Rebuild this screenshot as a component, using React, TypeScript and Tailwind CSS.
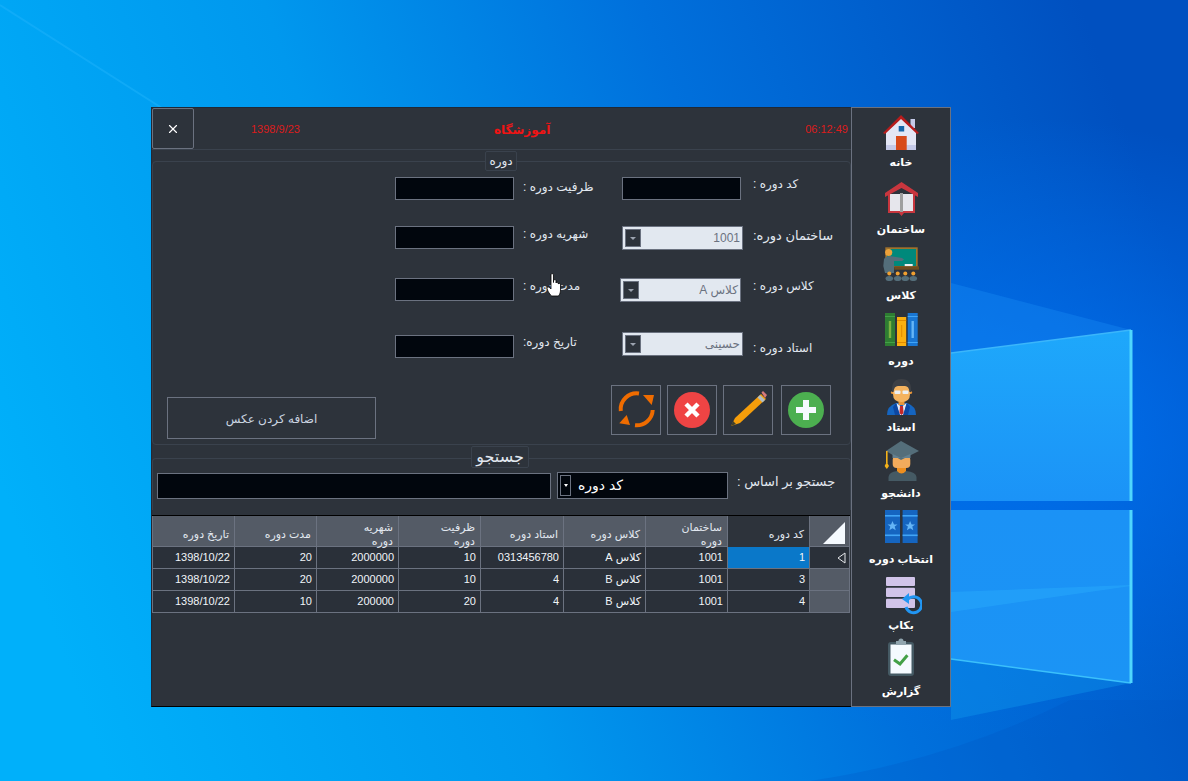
import React from 'react';
import { X } from 'lucide-react';

const Wallpaper = () => (
  <svg className="absolute inset-0 h-full w-full" viewBox="0 0 1188 781" preserveAspectRatio="none">
    <defs>
      <linearGradient id="wall" x1="0" y1="0.62" x2="1" y2="0.38">
        <stop offset="0" stopColor="#00b0fa" />
        <stop offset="0.35" stopColor="#0098ee" />
        <stop offset="0.65" stopColor="#0070dc" />
        <stop offset="1" stopColor="#0050c0" />
      </linearGradient>
      <radialGradient id="glow" cx="0.85" cy="0.55" r="0.4">
        <stop offset="0" stopColor="#0070f0" stopOpacity="0.9" />
        <stop offset="1" stopColor="#0070f0" stopOpacity="0" />
      </radialGradient>
      <linearGradient id="pane" x1="0" y1="0" x2="0" y2="1">
        <stop offset="0" stopColor="#1ea8fb" />
        <stop offset="1" stopColor="#1b93f7" />
      </linearGradient>
      <linearGradient id="pane2" x1="0" y1="0" x2="0" y2="1">
        <stop offset="0" stopColor="#1b92f6" />
        <stop offset="1" stopColor="#1b94f5" />
      </linearGradient>
    </defs>
    <rect width="1188" height="781" fill="url(#wall)" />
    <rect width="1188" height="781" fill="url(#glow)" />
    <path d="M0 5L165 110" stroke="#1ab0fa" strokeWidth="2" opacity="0.6" />
    <path d="M951 283L1131 330L951 353Z" fill="#1a90f5" opacity="0.35" />
    <path d="M951 659L1131 683L951 720Z" fill="#10a0f0" opacity="0.35" />
    <path d="M1070 700Q950 760 810 781L1188 781L1188 700Z" fill="#0050c0" opacity="0.22" />
    <path d="M951 353L1131 330L1131 501L951 501Z" fill="url(#pane)" />
    <path d="M951 510L1131 510L1131 683L951 659Z" fill="url(#pane2)" />
    <path d="M951 592L1131 585L1131 586L951 612Z" fill="#2aaefc" opacity="0.45" />
    <path d="M951 353L1131 330" stroke="#3bb6fb" strokeWidth="1.5" />
    <path d="M951 659L1131 683" stroke="#3bc0fb" strokeWidth="1.5" />
    <path d="M1131 330V501M1131 510V683" stroke="#4fd6fd" strokeWidth="3" />
  </svg>
);

const HomeIcon = () => (
  <svg width="36" height="36" viewBox="0 0 36 36">
    <rect x="27.5" y="4" width="4.5" height="9" fill="#c5cae9" />
    <path d="M3 17L18 3L33 17V35H3Z" fill="#e3e6f5" />
    <rect x="3" y="30" width="30" height="5" fill="#c5cae9" />
    <rect x="15.7" y="11" width="5.5" height="5.5" fill="#1565a8" />
    <rect x="13" y="21" width="10.7" height="14" fill="#d84a1b" />
    <path d="M0 18L18 0L36 18L34 19L18 4L2 19Z" fill="#b71c1c" />
  </svg>
);

const BookIcon = () => (
  <svg width="33" height="35" viewBox="0 0 33 35">
    <path d="M3 12H30V31H19L16.5 34L14 31H3Z" fill="#c8363e" />
    <rect x="5" y="12" width="11" height="17" fill="#e6e6ec" />
    <rect x="17" y="12" width="11" height="17" fill="#e6e6ec" />
    <rect x="15" y="11" width="3" height="19" fill="#9e9e9e" />
    <path d="M0 11L16.5 0L33 11V15L16.5 6L0 15Z" fill="#c8363e" />
  </svg>
);

const ClassIcon = () => (
  <svg width="36" height="34" viewBox="0 0 36 34">
    <rect x="2.3" y="0.3" width="32.4" height="20" fill="#a0712b" />
    <rect x="4" y="2" width="29" height="17" fill="#00897b" />
    <rect x="21.7" y="17" width="8" height="2.3" fill="#eceff1" />
    <rect x="11.3" y="19.3" width="25" height="3.4" fill="#6d4c1f" />
    <path d="M1 12Q3 9 7 9L19 11L21 12.5L19 14L11 14V26H2L0.3 19Z" fill="#546e7a" />
    <circle cx="5.7" cy="5.5" r="3.6" fill="#eda13a" />
    {[6.3, 14.7, 22.3, 30.3].map(x => (
      <g key={x}>
        <ellipse cx={x} cy="31.5" rx="3.8" ry="2.6" fill="#546e7a" />
        <circle cx={x} cy="26.5" r="2" fill="#f0a030" />
      </g>
    ))}
  </svg>
);

const BooksIcon = () => (
  <svg width="33" height="33" viewBox="0 0 33 33">
    <rect x="0" y="0" width="10" height="33" fill="#2e7d32" />
    <rect x="0" y="3" width="10" height="1" fill="#43a047" />
    <rect x="0" y="29" width="10" height="1" fill="#43a047" />
    <rect x="3.8" y="8" width="2.4" height="17" fill="#7cb342" />
    <rect x="12" y="4" width="9.2" height="29" fill="#fbb010" />
    <rect x="12" y="7" width="9.2" height="1" fill="#e08b00" />
    <rect x="12" y="29" width="9.2" height="1" fill="#e08b00" />
    <rect x="16.2" y="12" width="1" height="12" fill="#e08b00" />
    <rect x="22.7" y="0" width="10" height="33" fill="#1976d2" />
    <rect x="22.7" y="3" width="10" height="1" fill="#42a5f5" />
    <rect x="22.7" y="29" width="10" height="1" fill="#42a5f5" />
    <rect x="26.5" y="8" width="2.4" height="17" fill="#64b5f6" />
  </svg>
);

const TeacherIcon = () => (
  <svg width="29" height="36" viewBox="0 0 29 36">
    <path d="M0 36Q0 27 9 24H20Q29 27 29 36Z" fill="#1565c0" />
    <path d="M9.5 24L14.5 28L19.5 24L16.5 36H12.5Z" fill="#e8eaf6" />
    <path d="M13 27H16L16.6 34L14.5 36L12.4 34Z" fill="#c62828" />
    <path d="M9 24L13 36H8L6 28ZM20 24L16 36H21L23 28Z" fill="#0d47a1" />
    <rect x="11.5" y="19" width="6" height="7" fill="#e8963a" />
    <circle cx="5.5" cy="13.5" r="1.6" fill="#e8963a" />
    <circle cx="23.5" cy="13.5" r="1.6" fill="#e8963a" />
    <path d="M6 12Q6 4 14.5 4Q23 4 23 12V15Q23 23 14.5 23Q6 23 6 15Z" fill="#f5b35e" />
    <path d="M5 13Q4 0 14.5 0Q25 0 24 13L22.5 13Q22 7 18 7H11Q7 7 6.5 13Z" fill="#3d4045" />
    <rect x="7.5" y="11.5" width="6" height="3.5" rx="1" fill="#eceff1" />
    <rect x="15.5" y="11.5" width="6" height="3.5" rx="1" fill="#eceff1" />
  </svg>
);

const StudentIcon = () => (
  <svg width="35" height="40" viewBox="0 0 35 40">
    <path d="M4.5 40V36Q5 31 13 30H22Q32 31 32.5 36V40Z" fill="#455a64" />
    <path d="M13 26H22V30Q17.5 35 13 30Z" fill="#ee8f1f" />
    <rect x="8.7" y="15" width="17.6" height="12" rx="4" fill="#f2ab5c" />
    <rect x="8.7" y="10" width="17.6" height="7" fill="#607d8b" />
    <path d="M17 0L35 10L17 19L2 10Z" fill="#546e7a" />
    <path d="M8.7 13L17 17L26.3 13V17H8.7Z" fill="#64808f" />
    <rect x="2" y="10" width="1.6" height="12" fill="#f3b21a" />
    <path d="M2.8 21L5 25L2.8 28L0.6 25Z" fill="#f3b21a" />
  </svg>
);

const SelectIcon = () => (
  <svg width="33" height="33" viewBox="0 0 33 33">
    {[0, 17.6].map(x => (
      <g key={x}>
        <rect x={x} y="0" width="15" height="33" fill="#1565c0" />
        <rect x={x} y="5" width="15" height="1.6" fill="#42a5f5" />
        <rect x={x} y="24.5" width="15" height="1.6" fill="#42a5f5" />
        <path
          transform={`translate(${x + 7.5} 16)`}
          d="M0 -5L1.5 -1.6L5 -1.6L2.2 0.6L3.2 4.2L0 2.2L-3.2 4.2L-2.2 0.6L-5 -1.6L-1.5 -1.6Z"
          fill="#64b5f6"
        />
      </g>
    ))}
  </svg>
);

const BackupIcon = () => (
  <svg width="36" height="38" viewBox="0 0 36 38">
    <rect x="0" y="0" width="29" height="9" rx="1" fill="#d1c4e9" />
    <rect x="0" y="10.7" width="29" height="9.3" rx="1" fill="#d1c4e9" />
    <rect x="0" y="21.7" width="29" height="9.3" rx="1" fill="#d1c4e9" />
    <path d="M22 22A8 8 0 1 1 20 30" fill="none" stroke="#2196f3" strokeWidth="3" />
    <path d="M16 22L23 16V27Z" fill="#2196f3" />
  </svg>
);

const ReportIcon = () => (
  <svg width="26" height="40" viewBox="0 0 26 40">
    <rect x="0" y="5" width="26" height="34" rx="3" fill="#455a64" />
    <rect x="2.5" y="7.5" width="21" height="29" fill="#f5faff" />
    <path d="M8 8V4H10.5A2.5 2.5 0 0 1 15.5 4H18V8Z" fill="#90a4ae" />
    <path d="M6 22.7L12 27L19.4 18.3" fill="none" stroke="#43a047" strokeWidth="3" />
  </svg>
);

const navItems = [
  { label: 'خانه', icon: <HomeIcon />, box: 'h-[39px]' },
  { label: 'ساختمان', icon: <BookIcon />, box: 'h-[40px] pt-px' },
  { label: 'کلاس', icon: <ClassIcon />, box: 'h-[41px] pt-px' },
  { label: 'دوره', icon: <BooksIcon />, box: 'h-[41px] pt-px' },
  { label: 'استاد', icon: <TeacherIcon />, box: 'h-[41px] pt-px' },
  { label: 'دانشجو', icon: <StudentIcon />, box: 'h-[44px] -mt-[2px]' },
  { label: 'انتخاب دوره', icon: <SelectIcon />, box: 'h-[42px] pt-px' },
  { label: 'بکاپ', icon: <BackupIcon />, box: 'h-[42px] pt-[2px] pl-[6px]' },
  { label: 'گزارش', icon: <ReportIcon />, box: 'h-[46px] -mt-[3px]' },
];

const Sidebar = () => (
  <aside className="flex h-full w-[100px] flex-col items-center border border-[#6b7280] pt-[7px]">
    {navItems.map(item => (
      <div key={item.label} className="flex h-[66px] w-full flex-col items-center">
        <div className={`flex items-start justify-center ${item.box}`}>{item.icon}</div>
        <span dir="rtl" className="text-[11px] leading-[16px] font-bold text-white">
          {item.label}
        </span>
      </div>
    ))}
  </aside>
);

const DarkInput = ({ className = '' }: { className?: string }) => (
  <div className={`h-[23px] w-[119px] shrink-0 border border-[#6b7280] bg-[#01060d] ${className}`} />
);

const Combo = ({ value, className = '' }: { value: string; className?: string }) => (
  <div className={`flex h-[24px] w-[121px] shrink-0 items-center justify-between border border-[#6b7280] bg-[#e2e8f0] pl-[2px] pr-[2px] ${className}`}>
    <div className="flex h-[18px] w-[16px] items-center justify-center border border-[#6b7280] bg-[#2d333b]">
      <div className="h-0 w-0 border-x-[3px] border-t-[3px] border-x-transparent border-t-[#9ca3af]" />
    </div>
    <span dir="rtl" className="text-[12px] text-[#6b7280]">{value}</span>
  </div>
);

const Label = ({ text, className = 'text-[12px]' }: { text: string; className?: string }) => (
  <span dir="rtl" className={`block w-fit leading-[16px] whitespace-nowrap text-[#e2e8f0] ${className}`}>
    {text}
  </span>
);

const Legend = ({ text, className }: { text: string; className: string }) => (
  <div className={`absolute flex items-center justify-center rounded-[2px] border border-[#3a424d] bg-[#2d333b] text-[#e2e8f0] ${className}`}>
    <span dir="rtl">{text}</span>
  </div>
);

const CourseForm = () => (
  <div className="pl-[242px] pt-[15px]">
    <div className="flex h-[49px] items-start">
      <DarkInput />
      <div className="w-[108px] pl-[9px]"><Label text="ظرفیت دوره :" className="mt-[2px] text-[12px]" /></div>
      <DarkInput />
      <div className="pl-[12px]"><Label text="کد دوره :" className="-mt-px text-[12px]" /></div>
    </div>
    <div className="flex h-[52px] items-start">
      <DarkInput />
      <div className="w-[108px] pl-[9px]"><Label text="شهریه دوره :" /></div>
      <Combo value="1001" />
      <div className="pl-[10px]"><Label text="ساختمان دوره:" className="mt-[2px] text-[13px]" /></div>
    </div>
    <div className="flex h-[54px] items-start">
      <DarkInput />
      <div className="w-[106px] pl-[9px]"><Label text="مدت دوره :" /></div>
      <Combo value="کلاس A" />
      <div className="pl-[12px]"><Label text="کلاس دوره :" /></div>
    </div>
    <div className="flex h-[53px] items-start">
      <DarkInput className="mt-[3px]" />
      <div className="w-[108px] pl-[9px]"><Label text="تاریخ دوره:" className="mt-[2px] text-[12px]" /></div>
      <Combo value="حسینی" />
      <div className="pl-[10px]"><Label text="استاد دوره :" className="mt-[8px] text-[12px]" /></div>
    </div>
  </div>
);

const iconButton = 'flex h-[50px] w-[50px] items-center justify-center border border-[#6b7280]';

const ActionButtons = () => (
  <div className="flex items-start pl-[14px]">
    <button className="mt-[12px] flex h-[42px] w-[209px] items-center justify-center border border-[#6b7280] pt-[2px] text-[12px] text-[#cbd5e1]">
      <span dir="rtl">اضافه کردن عکس</span>
    </button>
    <div className="ml-[235px] flex">
      <button className={iconButton}>
        <svg width="40" height="40" viewBox="0 0 40 40">
          <path d="M23 3.5A16 16 0 0 0 4.8 21" fill="none" stroke="#ef6c00" strokeWidth="4" />
          <path d="M19 35.2A16 16 0 0 0 36.7 20" fill="none" stroke="#ef6c00" strokeWidth="4" />
          <path d="M27 5L38 5L35.7 15Z" fill="#ef6c00" />
          <path d="M3.3 33.3L14 35L10.7 25Z" fill="#ef6c00" />
        </svg>
      </button>
      <button className={`${iconButton} ml-[6px]`}>
        <svg width="36" height="36" viewBox="0 0 36 36">
          <circle cx="18" cy="18" r="18" fill="#ef4444" />
          <path d="M12 12L24 24M24 12L12 24" stroke="#fff" strokeWidth="4.5" />
        </svg>
      </button>
      <button className={`${iconButton} ml-[6px]`}>
        <svg width="40" height="40" viewBox="0 0 40 40">
          <path d="M3 36L7 28L33 4L38 9L12 33Z" fill="#f59e0b" />
          <path d="M3 36L5 31L8 34Z" fill="#3f3f2a" />
          <path d="M32 5L37 10L34.5 12.5L29.5 7.5Z" fill="#b0bec5" />
          <path d="M33.5 2.5L35 1L39 5L37 8Z" fill="#d77a7a" />
        </svg>
      </button>
      <button className={`${iconButton} ml-[8px]`}>
        <svg width="36" height="36" viewBox="0 0 36 36">
          <circle cx="18" cy="18" r="18" fill="#4caf50" />
          <path d="M18 8V28M8 18H28" stroke="#f5faff" strokeWidth="6" />
        </svg>
      </button>
    </div>
  </div>
);

const SearchBar = () => (
  <div className="flex items-start pl-[4px] pt-[13px]">
    <div className="mt-px h-[26px] w-[394px] border border-[#6b7280] bg-[#01060d]" />
    <div className="ml-[6px] flex h-[27px] w-[171px] items-center border border-[#6b7280] bg-[#01060d] pl-[2px]">
      <div className="flex h-[21px] w-[11px] items-center justify-center border border-[#6b7280]">
        <div className="h-0 w-0 border-x-[2.5px] border-t-[3px] border-x-transparent border-t-white" />
      </div>
      <span dir="rtl" className="ml-[7px] text-[14px] text-white">کد دوره</span>
    </div>
    <Label text="جستجو بر اساس :" className="ml-[9px] mt-[2px] text-[13px]" />
  </div>
);

const columns = ['تاریخ دوره', 'مدت دوره', 'شهریه\nدوره', 'ظرفیت\nدوره', 'استاد دوره', 'کلاس دوره', 'ساختمان\nدوره', 'کد دوره'];

const rows = [
  ['1398/10/22', '20', '2000000', '10', '0313456780', 'کلاس A', '1001', '1'],
  ['1398/10/22', '20', '2000000', '10', '4', 'کلاس B', '1001', '3'],
  ['1398/10/22', '10', '200000', '20', '4', 'کلاس B', '1001', '4'],
];

const gridCols = 'grid grid-cols-[82px_82px_82px_82px_83px_82px_82px_82px_40px]';

const CourseTable = () => (
  <div className="mt-[5px] w-[698px] border-t border-black">
    <div className={`${gridCols} h-[31px] border-r border-b border-[#6b7280] bg-[#545b66]`}>
      {columns.map((col, i) => (
        <div
          key={col}
          dir="rtl"
          className={`flex items-center border-l border-[#6b7280] pr-[5px] pt-[4px] text-[11px] leading-[14px] whitespace-pre-line text-[#e2e8f0] ${i === 7 ? 'bg-[#2d333b]' : ''}`}
        >
          {col}
        </div>
      ))}
      <div className="flex items-center justify-center border-l border-[#6b7280]">
        <div className="mt-[2px] ml-[8px] h-0 w-0 border-b-[22px] border-l-[22px] border-b-[#f5faff] border-l-transparent" />
      </div>
    </div>
    {rows.map((row, r) => (
      <div key={r} className={`${gridCols} h-[22px] border-r border-b border-[#6b7280] bg-[#2a3039]`}>
        {row.map((cell, c) => (
          <div
            key={c}
            dir="rtl"
            className={`flex items-center border-l border-[#6b7280] pr-[4px] text-[11px] text-[#f1f5f9] ${r === 0 && c === 7 ? 'bg-[#0a78c9]' : ''}`}
          >
            {cell}
          </div>
        ))}
        <div className={`flex items-center border-l border-[#6b7280] ${r === 0 ? 'justify-end pr-[3px]' : 'bg-[#545b66]'}`}>
          {r === 0 && (
            <svg width="9" height="12" viewBox="0 0 9 12">
              <path d="M8 1V11L1 6Z" fill="none" stroke="#e5e7eb" />
            </svg>
          )}
        </div>
      </div>
    ))}
  </div>
);

export default function App() {
  return (
    <div className="relative h-[781px] w-[1188px] overflow-hidden font-['Liberation_Sans','DejaVu_Sans',sans-serif]">
      <Wallpaper />
      <div className="absolute left-[151px] top-[107px] flex h-[600px] w-[800px] bg-[#2d333b]">
        <main className="flex h-full w-[700px] flex-col border-b border-l border-t border-b-black border-l-[#1f2937] border-t-[#1f2937]">
          <header className="flex h-[42px] shrink-0 items-center border-b border-[#3a424d]">
            <button className="flex h-[41px] w-[42px] items-center justify-center rounded-[2px] border border-[#6b7280] text-white">
              <X size={14} strokeWidth={2} />
            </button>
            <span className="ml-[57px] mt-px text-[11px] text-[#dc1c1c]">1398/9/23</span>
            <span dir="rtl" className="ml-[194px] mt-[2px] text-[12px] font-bold text-[#f01414]">آموزشگاه</span>
            <span className="ml-auto mt-px pr-[3px] text-[11px] text-[#dc1c1c]">06:12:49</span>
          </header>

          <section className="relative mt-[11px] h-[284px] shrink-0 rounded-[4px] border border-[#3a424d]">
            <Legend text="دوره" className="left-[332px] -top-[11px] h-[20px] w-[32px] text-[12px]" />
            <CourseForm />
            <ActionButtons />
          </section>

          <section className="relative mt-[13px] h-[52px] shrink-0 rounded-t-[4px] border-x border-t border-[#3a424d]">
            <Legend text="جستجو" className="left-[318px] -top-[13px] h-[22px] w-[58px] text-[16px]" />
            <SearchBar />
          </section>

          <CourseTable />
        </main>
        <Sidebar />
      </div>

      <svg className="absolute left-[546px] top-[273px]" width="18" height="24" viewBox="0 0 18 24">
        <path
          d="M5 1.5C5 .5 7.5 .5 7.5 1.5V9.5V7.5C7.5 6.5 10 6.5 10 7.5V10C10 9 12.3 9 12.3 10V11C12.3 10.2 14.5 10.2 14.5 11.2V17C14.5 20 13 23 12 23H6C4.5 23 1 17 1 15C1 13.5 3 13.5 5 16Z"
          fill="#fff"
          stroke="#000"
          strokeWidth="0.8"
        />
      </svg>
    </div>
  );
}
